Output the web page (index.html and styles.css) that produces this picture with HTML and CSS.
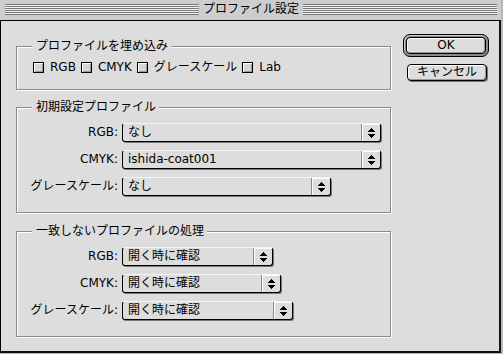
FILE: index.html
```html
<!DOCTYPE html>
<html lang="ja">
<head>
    <meta charset="UTF-8">
    <title>プロファイル設定</title>
    <link rel="stylesheet" href="styles.css">
</head>
<body>
    <div class="window">
        <div class="titlebar">
            <span class="stripes"></span>
            <span class="title">プロファイル設定</span>
            <span class="stripes"></span>
        </div>

        <div class="dialog">
            <div class="main">
                <div class="group group-embed">
                    <div class="group-title">プロファイルを埋め込み</div>
                    <div class="checks">
                        <label class="check"><span class="box"></span>RGB</label>
                        <label class="check"><span class="box"></span>CMYK</label>
                        <label class="check"><span class="box"></span>グレースケール</label>
                        <label class="check"><span class="box"></span>Lab</label>
                    </div>
                </div>

                <div class="group group-default">
                    <div class="group-title">初期設定プロファイル</div>
                    <div class="rows">
                        <span class="row-label">RGB:</span>
                        <div class="popup popup-full">
                            <span class="popup-value">なし</span>
                            <span class="popup-arrow"><svg width="7" height="10" viewBox="0 0 7 10"><polygon points="3.5,0 7,4 0,4"/><polygon points="0,6 7,6 3.5,10"/></svg></span>
                        </div>

                        <span class="row-label">CMYK:</span>
                        <div class="popup popup-full">
                            <span class="popup-value">ishida-coat001</span>
                            <span class="popup-arrow"><svg width="7" height="10" viewBox="0 0 7 10"><polygon points="3.5,0 7,4 0,4"/><polygon points="0,6 7,6 3.5,10"/></svg></span>
                        </div>

                        <span class="row-label">グレースケール:</span>
                        <div class="popup popup-gray">
                            <span class="popup-value">なし</span>
                            <span class="popup-arrow"><svg width="7" height="10" viewBox="0 0 7 10"><polygon points="3.5,0 7,4 0,4"/><polygon points="0,6 7,6 3.5,10"/></svg></span>
                        </div>
                    </div>
                </div>

                <div class="group group-mismatch">
                    <div class="group-title">一致しないプロファイルの処理</div>
                    <div class="rows">
                        <span class="row-label">RGB:</span>
                        <div class="popup popup-s">
                            <span class="popup-value">開く時に確認</span>
                            <span class="popup-arrow"><svg width="7" height="10" viewBox="0 0 7 10"><polygon points="3.5,0 7,4 0,4"/><polygon points="0,6 7,6 3.5,10"/></svg></span>
                        </div>

                        <span class="row-label">CMYK:</span>
                        <div class="popup popup-m">
                            <span class="popup-value">開く時に確認</span>
                            <span class="popup-arrow"><svg width="7" height="10" viewBox="0 0 7 10"><polygon points="3.5,0 7,4 0,4"/><polygon points="0,6 7,6 3.5,10"/></svg></span>
                        </div>

                        <span class="row-label">グレースケール:</span>
                        <div class="popup popup-l">
                            <span class="popup-value">開く時に確認</span>
                            <span class="popup-arrow"><svg width="7" height="10" viewBox="0 0 7 10"><polygon points="3.5,0 7,4 0,4"/><polygon points="0,6 7,6 3.5,10"/></svg></span>
                        </div>
                    </div>
                </div>
            </div>

            <div class="side">
                <div class="default-ring">
                    <button class="btn">OK</button>
                </div>
                <button class="btn btn-cancel">キャンセル</button>
            </div>
        </div>
    </div>
</body>
</html>
```

FILE: styles.css
```css
* {
    margin: 0;
    padding: 0;
    box-sizing: border-box;
}

html,
body {
    background: #b8b8b8;
}

body {
    width: 503px;
    height: 354px;
    font-family: "DejaVu Sans", "Noto Sans CJK JP", sans-serif;
    font-size: 12px;
    color: #000;
}

.window {
    width: 501px;
    height: 353px;
    display: flex;
    flex-direction: column;
}

/* title bar */
.titlebar {
    height: 21px;
    background: #cdcdcd;
    border-bottom: 1px solid #000;
    display: flex;
    align-items: flex-start;
    padding: 0 4px 0 5px;
}

.stripes {
    flex: 1;
    height: 11px;
    margin-top: 4px;
    background: repeating-linear-gradient(#777 0 1px, #f2f2f2 1px 2px);
}

.title {
    margin: 0 4px;
    line-height: 19px;
}

/* dialog body */
.dialog {
    flex: 1;
    display: flex;
    background: #dddddd;
    border-left: 1px solid #000;
    border-right: 2px solid #111;
    border-bottom: 2px solid #111;
}

.main {
    padding: 25px 0 0 15px;
    display: flex;
    flex-direction: column;
}

.group {
    width: 375px;
    border: 1px solid #8a8a8a;
    box-shadow: 1px 1px 0 #fff, inset 1px 1px 0 #fff;
    display: flex;
    flex-direction: column;
    align-items: flex-start;
}

.group-embed {
    height: 44px;
}

.group-default {
    height: 106px;
    margin-top: 17px;
}

.group-mismatch {
    height: 106px;
    margin-top: 18px;
}

.group-title {
    margin: -8px 0 0 15px;
    padding: 0 3px 0 4px;
    height: 14px;
    line-height: 14px;
    background: #dddddd;
}

/* checkboxes */
.checks {
    display: flex;
    gap: 5px;
    margin-top: 8px;
    padding-left: 16px;
}

.check {
    display: flex;
    align-items: center;
    line-height: 13px;
}

.box {
    width: 11px;
    height: 11px;
    margin-right: 6px;
    border: 1px solid #000;
    background: #d6d6d6;
    box-shadow: inset 1px 1px 0 #fff, inset -1px -1px 0 #999;
}

/* popup rows */
.rows {
    display: grid;
    grid-template-columns: 101px max-content;
    column-gap: 4px;
    row-gap: 8px;
    align-items: center;
    margin-top: 9px;
}

.row-label {
    justify-self: end;
    line-height: 19px;
}

.popup {
    height: 19px;
    display: flex;
    border: 1px solid #000;
    border-top-color: #f4f4f4;
    border-radius: 3px;
    box-shadow: 1px 1px 0 #777;
    background: #dddddd;
}

.popup-full { width: 259px; }
.popup-gray { width: 209px; }
.popup-s { width: 151px; }
.popup-m { width: 159px; }
.popup-l { width: 171px; }

.popup-value {
    flex: 1;
    padding-left: 5px;
    line-height: 17px;
    white-space: nowrap;
}

.popup-arrow {
    width: 19px;
    border-left: 1px solid #8a8a8a;
    box-shadow: inset 1px 1px 0 #fff;
    display: flex;
    align-items: center;
    justify-content: center;
}

.popup-arrow svg {
    fill: #000;
    shape-rendering: crispEdges;
}

/* buttons */
.side {
    margin-left: 12px;
    padding-top: 13px;
    display: flex;
    flex-direction: column;
    align-items: flex-start;
}

.default-ring {
    border: 1px solid #000;
    border-radius: 7px;
    padding: 2px;
    background: #8c8c8c;
    box-shadow: inset 1px 1px 0 #c8c8c8;
}

.btn {
    width: 80px;
    height: 17px;
    border: 1px solid #000;
    border-radius: 4px;
    background: #dddddd;
    box-shadow: inset 1px 1px 0 #fff, inset -1px -1px 0 #999;
    font-family: inherit;
    font-size: 12px;
    line-height: 15px;
    color: #000;
    text-align: center;
}

.btn-cancel {
    margin: 7px 0 0 4px;
    box-shadow: inset 1px 1px 0 #fff, inset -1px -1px 0 #999, 1px 1px 0 #777;
}
```
